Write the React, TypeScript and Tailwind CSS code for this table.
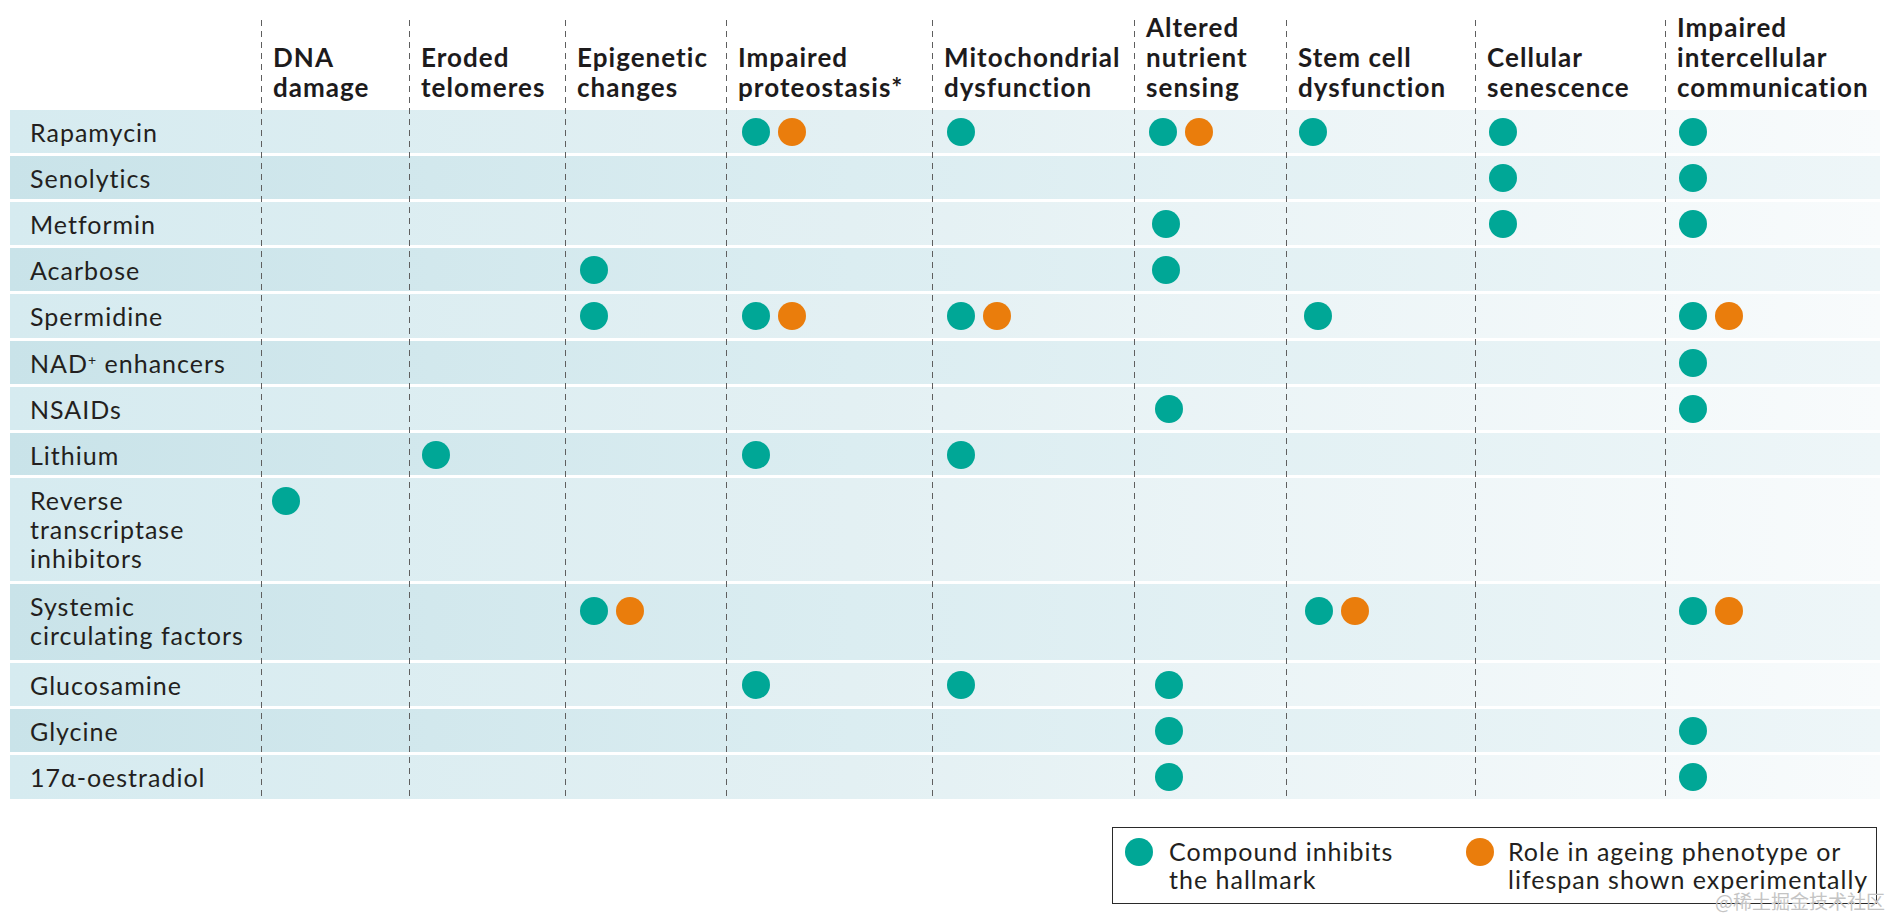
import React from "react";

type Mark = { col: number; orange?: boolean; nudge?: number };

interface Row {
    label: React.ReactNode;
    height: string;
    dotTop: string;
    marks: Mark[];
}

const COLS =
    "grid grid-cols-[251px_148px_156px_161px_206px_202px_152px_189px_190px_215px]";

const headers: string[][] = [
    ["DNA", "damage"],
    ["Eroded", "telomeres"],
    ["Epigenetic", "changes"],
    ["Impaired", "proteostasis*"],
    ["Mitochondrial", "dysfunction"],
    ["Altered", "nutrient", "sensing"],
    ["Stem cell", "dysfunction"],
    ["Cellular", "senescence"],
    ["Impaired", "intercellular", "communication"],
];

// left offset of the first dot inside each column
const colPad = [11, 13, 15, 16, 15, 15, 13, 14, 14];

const rows: Row[] = [
    {
        label: "Rapamycin",
        height: "h-[43px]",
        dotTop: "pt-[8px]",
        marks: [
            { col: 3, orange: true },
            { col: 4 },
            { col: 5, orange: true },
            { col: 6 },
            { col: 7 },
            { col: 8 },
        ],
    },
    { label: "Senolytics", height: "h-[43px]", dotTop: "pt-[8px]", marks: [{ col: 7 }, { col: 8 }] },
    {
        label: "Metformin",
        height: "h-[43px]",
        dotTop: "pt-[8px]",
        marks: [{ col: 5, nudge: 3 }, { col: 7 }, { col: 8 }],
    },
    { label: "Acarbose", height: "h-[43px]", dotTop: "pt-[8px]", marks: [{ col: 2 }, { col: 5, nudge: 3 }] },
    {
        label: "Spermidine",
        height: "h-[44px]",
        dotTop: "pt-[8px]",
        marks: [
            { col: 2 },
            { col: 3, orange: true },
            { col: 4, orange: true },
            { col: 6, nudge: 5 },
            { col: 8, orange: true },
        ],
    },
    {
        label: (
            <>
                NAD<sup className="text-[14px] -top-[0.6em]">+</sup> enhancers
            </>
        ),
        height: "h-[43px]",
        dotTop: "pt-[8px]",
        marks: [{ col: 8 }],
    },
    { label: "NSAIDs", height: "h-[43px]", dotTop: "pt-[8px]", marks: [{ col: 5, nudge: 6 }, { col: 8 }] },
    { label: "Lithium", height: "h-[42px]", dotTop: "pt-[8px]", marks: [{ col: 1 }, { col: 3 }, { col: 4 }] },
    {
        label: (
            <>
                Reverse
                <br />
                transcriptase
                <br />
                inhibitors
            </>
        ),
        height: "h-[103px]",
        dotTop: "pt-[9px]",
        marks: [{ col: 0 }],
    },
    {
        label: (
            <>
                Systemic
                <br />
                circulating factors
            </>
        ),
        height: "h-[76px]",
        dotTop: "pt-[13px]",
        marks: [
            { col: 2, orange: true },
            { col: 6, orange: true, nudge: 6 },
            { col: 8, orange: true },
        ],
    },
    {
        label: "Glucosamine",
        height: "h-[43px]",
        dotTop: "pt-[8px]",
        marks: [{ col: 3 }, { col: 4 }, { col: 5, nudge: 6 }],
    },
    { label: "Glycine", height: "h-[43px]", dotTop: "pt-[8px]", marks: [{ col: 5, nudge: 6 }, { col: 8 }] },
    {
        label: "17α-oestradiol",
        height: "h-[44px]",
        dotTop: "pt-[8px]",
        marks: [{ col: 5, nudge: 6 }, { col: 8 }],
    },
];

function Dot({ orange }: { orange?: boolean }) {
    return (
        <span
            className={
                "block shrink-0 w-[28px] h-[28px] rounded-full " +
                (orange ? "bg-[#ea7d0c]" : "bg-[#00a796]")
            }
        />
    );
}

function Cell({ mark, pad, dotTop }: { mark?: Mark; pad: number; dotTop: string }) {
    if (!mark) return <div />;
    return (
        <div className={"flex gap-[8px] " + dotTop} style={{ paddingLeft: pad + (mark.nudge ?? 0) }}>
            <Dot />
            {mark.orange && <Dot orange />}
        </div>
    );
}

export default function App() {
    return (
        <div className="relative w-[1893px] h-[917px] bg-white text-[#231f20] font-['Lato',sans-serif] overflow-hidden">
            {/*==========Dashed column lines====================================================================*/}
            <div className={"absolute left-[10px] top-[20px] h-[780px] w-[1870px] pointer-events-none " + COLS}>
                <div />
                {headers.map((_, i) => (
                    <div key={i} className="h-full w-px bg-[repeating-linear-gradient(to_bottom,#5f5f5f_0_6px,transparent_6px_11px)]" />
                ))}
            </div>

            {/*==========Header========================================================================*/}
            <div className={"h-[110px] ml-[10px] w-[1870px] items-end pb-[8px] " + COLS}>
                <div />
                {headers.map((lines, i) => (
                    <div key={i} className="pl-[12px] text-[26px] leading-[30px] tracking-[0.04em] font-bold text-[#1d1b1c]">
                        {lines.map((l) => (
                            <div key={l} className="whitespace-nowrap">
                                {l}
                            </div>
                        ))}
                    </div>
                ))}
            </div>

            {/*==========Rows==========================================================================*/}
            <div className="flex flex-col gap-[3px] ml-[10px] w-[1870px]">
                {rows.map((row, r) => (
                    <div
                        key={r}
                        className={
                            COLS +
                            " " +
                            row.height +
                            (r % 2 === 0
                                ? " bg-[linear-gradient(to_right,#d6ebf0,#e3f0f3_45%,#f8fbfc)]"
                                : " bg-[linear-gradient(to_right,#c9e3e9,#dbedf1_45%,#eef6f8)]")
                        }
                    >
                        <div className="pl-[20px] pt-[8px] text-[25px] leading-[29px] tracking-[0.04em] whitespace-nowrap">
                            {row.label}
                        </div>
                        {colPad.map((pad, c) => (
                            <Cell key={c} pad={pad} dotTop={row.dotTop} mark={row.marks.find((m) => m.col === c)} />
                        ))}
                    </div>
                ))}
            </div>

            {/*==========Legend========================================================================*/}
            <div className="flex justify-end mt-[28px] pr-[16px]">
                <div className="flex w-[765px] h-[77px] border border-[#2a2a2a] pl-[12px] pt-[10px]">
                    <div className="flex w-[341px] gap-[16px]">
                        <Dot />
                        <p className="text-[25px] leading-[28px] tracking-[0.04em] -mt-[1px] whitespace-nowrap">
                            Compound inhibits
                            <br />
                            the hallmark
                        </p>
                    </div>
                    <div className="flex gap-[14px]">
                        <Dot orange />
                        <p className="text-[25px] leading-[28px] tracking-[0.04em] -mt-[1px] whitespace-nowrap">
                            Role in ageing phenotype or
                            <br />
                            lifespan shown experimentally
                        </p>
                    </div>
                </div>
            </div>

            {/* watermark */}
            <span className="absolute right-[8px] bottom-[5px] text-[19px] leading-[23px] text-[#c4c4c4] font-['Noto_Sans_CJK_SC',sans-serif]">
                @稀土掘金技术社区
            </span>
        </div>
    );
}
